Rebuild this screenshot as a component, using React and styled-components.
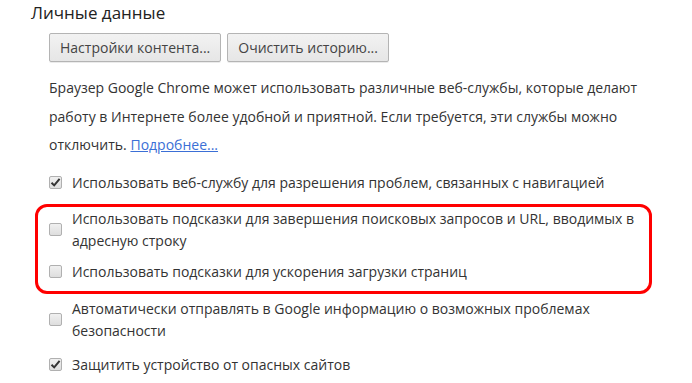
import styled, { createGlobalStyle } from "styled-components";

const GlobalStyle = createGlobalStyle`
  body {
    margin: 0;
    background: #fff;
    font-family: "Open Sans", "Noto Sans", sans-serif;
    color: #333;
  }
`;

const Page = styled.div`
  padding: 2px 0 0 31px;
`;

const Heading = styled.h3`
  margin: 0;
  font-size: 17px;
  font-weight: 400;
  line-height: 22px;
  color: #222;
`;

const Content = styled.div`
  margin-left: 18px;
  width: 600px;
`;

const ButtonRow = styled.div`
  display: flex;
  gap: 6px;
  margin-top: 9px;
`;

const Button = styled.button`
  height: 29px;
  padding: 0 10px;
  border: 1px solid #b4b4b4;
  border-radius: 2px;
  background: linear-gradient(#f2f2f2, #e6e6e6);
  box-shadow: 0 1px 0 rgba(0, 0, 0, 0.08);
  font-family: inherit;
  font-size: 14px;
  color: #444;
`;

const Paragraph = styled.p`
  margin: 12px 0 0;
  font-size: 14px;
  line-height: 28.5px;
`;

const Link = styled.a`
  color: #3b6fd6;
  text-decoration: underline;
`;

const Option = styled.label`
  display: flex;
  align-items: center;
  gap: 10px;
  margin-top: ${(p) => p.$gap ?? 0}px;
  font-size: 14px;
  line-height: 22px;
`;

const Box = styled.span`
  flex: none;
  width: 13px;
  height: 13px;
  box-sizing: border-box;
  border: 1px solid #b0b0b0;
  border-radius: 2px;
  background: linear-gradient(#f0f0f0, #dedede);
  display: flex;
  align-items: center;
  justify-content: center;
`;

const Highlight = styled.div`
  margin: 10px -3px 0 -14px;
  padding: 1px 3px 8px 11px;
  border: 3px solid #f00;
  border-radius: 12px;
`;

const Checkbox = ({ checked }) => (
  <Box>
    {checked && (
      <svg width="11" height="11" viewBox="0 0 11 11">
        <path d="M1.5 5.8 L4.2 8.4 L9.6 1.8" fill="none" stroke="#333" strokeWidth="2" />
      </svg>
    )}
  </Box>
);

export default function App() {
  return (
    <>
      <GlobalStyle />
      <Page>
        <Heading>Личные данные</Heading>
        <Content>
          <ButtonRow>
            <Button>Настройки контента...</Button>
            <Button>Очистить историю...</Button>
          </ButtonRow>
          <Paragraph>
            Браузер Google Chrome может использовать различные веб-службы, которые делают
            работу в Интернете более удобной и приятной. Если требуется, эти службы можно
            отключить. <Link href="#">Подробнее...</Link>
          </Paragraph>
          <Option $gap={12}>
            <Checkbox checked />
            <span>Использовать веб-службу для разрешения проблем, связанных с навигацией</span>
          </Option>
          <Highlight>
            <Option>
              <Checkbox />
              <span>
                Использовать подсказки для завершения поисковых запросов и URL, вводимых в
                адресную строку
              </span>
            </Option>
            <Option $gap={9}>
              <Checkbox />
              <span>Использовать подсказки для ускорения загрузки страниц</span>
            </Option>
          </Highlight>
          <Option $gap={4}>
            <Checkbox />
            <span>
              Автоматически отправлять в Google информацию о возможных проблемах безопасности
            </span>
          </Option>
          <Option $gap={12}>
            <Checkbox checked />
            <span>Защитить устройство от опасных сайтов</span>
          </Option>
        </Content>
      </Page>
    </>
  );
}
